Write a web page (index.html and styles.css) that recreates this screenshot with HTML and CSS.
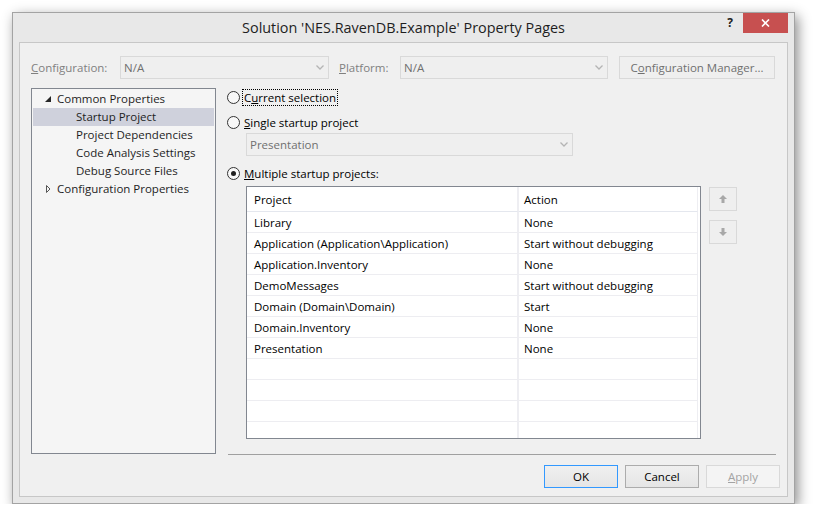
FILE: index.html
```html
<!DOCTYPE html>
<html>
<head>
<meta charset="utf-8">
<title>Property Pages</title>
<link rel="stylesheet" href="styles.css">
</head>
<body>
<div class="desk">
  <div class="window">
    <div class="titlebar">
      <div></div>
      <div class="title">Solution 'NES.RavenDB.Example' Property Pages</div>
      <div class="caption-btns">
        <div class="help">?</div>
        <div class="close"><svg width="9" height="8" viewBox="0 0 9 8"><path d="M1 0.5L8 7.5M8 0.5L1 7.5" stroke="#fff" stroke-width="1.6"/></svg></div>
      </div>
    </div>
    <div class="client">
      <div class="config-row">
        <span class="lbl lbl-config"><u>C</u>onfiguration:</span>
        <div class="combo combo-config"><span>N/A</span><svg width="8" height="5" viewBox="0 0 8 5"><path d="M0.5 0.5L4 4L7.5 0.5" fill="none" stroke="#b4b4b4" stroke-width="1.3"/></svg></div>
        <span class="lbl lbl-platform"><u>P</u>latform:</span>
        <div class="combo combo-platform"><span>N/A</span><svg width="8" height="5" viewBox="0 0 8 5"><path d="M0.5 0.5L4 4L7.5 0.5" fill="none" stroke="#b4b4b4" stroke-width="1.3"/></svg></div>
        <div class="btn btn-cfgmgr">C<u>o</u>nfiguration Manager...</div>
      </div>
      <div class="main">
        <div class="tree">
          <div class="node"><svg width="6" height="6" viewBox="0 0 6 6"><path d="M6 0V6H0Z" fill="#262626"/></svg>Common Properties</div>
          <div class="node child selected">Startup Project</div>
          <div class="node child">Project Dependencies</div>
          <div class="node child">Code Analysis Settings</div>
          <div class="node child">Debug Source Files</div>
          <div class="node"><svg width="6" height="8" viewBox="0 0 6 8"><path d="M1.5 0.5L5 4L1.5 7.5Z" fill="none" stroke="#555"/></svg>Configuration Properties</div>
        </div>
        <div class="pane">
          <div class="radio-row"><span class="radio"></span><span class="rlabel focus">C<u>u</u>rrent selection</span></div>
          <div class="radio-row r2"><span class="radio"></span><span class="rlabel"><u>S</u>ingle startup project</span></div>
          <div class="combo combo-single"><span>Presentation</span><svg width="8" height="5" viewBox="0 0 8 5"><path d="M0.5 0.5L4 4L7.5 0.5" fill="none" stroke="#b4b4b4" stroke-width="1.3"/></svg></div>
          <div class="radio-row r3"><span class="radio checked"></span><span class="rlabel"><u>M</u>ultiple startup projects:</span></div>
          <div class="grid-row">
            <div class="grid-box">
              <div class="grid">
                <div class="cell c1 head">Project</div><div class="cell c2 head">Action</div>
                <div class="cell c1">Library</div><div class="cell c2">None</div>
                <div class="cell c1">Application (Application\Application)</div><div class="cell c2">Start without debugging</div>
                <div class="cell c1">Application.Inventory</div><div class="cell c2">None</div>
                <div class="cell c1">DemoMessages</div><div class="cell c2">Start without debugging</div>
                <div class="cell c1">Domain (Domain\Domain)</div><div class="cell c2">Start</div>
                <div class="cell c1">Domain.Inventory</div><div class="cell c2">None</div>
                <div class="cell c1">Presentation</div><div class="cell c2">None</div>
                <div class="cell c1"></div><div class="cell c2"></div>
                <div class="cell c1"></div><div class="cell c2"></div>
                <div class="cell c1"></div><div class="cell c2"></div>
                <div class="cell c1"></div><div class="cell c2"></div>
              </div>
            </div>
            <div class="movers">
              <div class="mover"><svg width="8" height="8" viewBox="0 0 8 8"><path d="M4 0L8 4H5.5V8H2.5V4H0Z" fill="#a8a8a8"/></svg></div>
              <div class="mover"><svg width="8" height="8" viewBox="0 0 8 8"><path d="M4 8L8 4H5.5V0H2.5V4H0Z" fill="#a8a8a8"/></svg></div>
            </div>
          </div>
          <div class="sep"></div>
        </div>
      </div>
      <div class="buttons">
        <div class="dlg-btn default">OK</div>
        <div class="dlg-btn">Cancel</div>
        <div class="dlg-btn disabled"><u>A</u>pply</div>
      </div>
    </div>
  </div>
</div>
</body>
</html>
```
FILE: styles.css
```css
body {
  margin: 0;
  background: #fff;
  font-family: "Open Sans", "Noto Sans", sans-serif;
  font-size: 11.5px;
  color: #000;
}
.desk {
  padding: 12px 0 0 12px;
}
.window {
  box-sizing: border-box;
  width: 783px;
  height: 492px;
  border: 1px solid #a3a3a3;
  background: #e8e8e8;
  padding: 0 6px 6px;
  display: flex;
  flex-direction: column;
  box-shadow: 3px 4px 12px rgba(0, 0, 0, 0.45);
}
.titlebar {
  flex: none;
  height: 29px;
  display: grid;
  grid-template-columns: 1fr auto 1fr;
}
.title {
  font-size: 14.4px;
  line-height: 29px;
  color: #1e1e1e;
  white-space: nowrap;
}
.caption-btns {
  display: flex;
  justify-content: flex-end;
  align-items: flex-start;
}
.help {
  width: 26px;
  height: 20px;
  font-weight: bold;
  font-size: 12px;
  line-height: 20px;
  text-align: center;
  color: #222;
}
.close {
  width: 45px;
  height: 20px;
  background: #c75050;
  display: flex;
  align-items: center;
  justify-content: center;
}
.client {
  flex: 1;
  border: 1px solid #c7c7c7;
  background: #f0f0f0;
}
.config-row {
  display: flex;
  align-items: center;
  height: 23px;
  margin: 13px 11px 0;
}
.lbl {
  color: #808080;
  white-space: nowrap;
}
.lbl-config { width: 89px; }
.lbl-platform { width: 61px; margin-left: 10px; }
.combo {
  box-sizing: border-box;
  height: 23px;
  border: 1px solid #d9d9d9;
  background: #efefef;
  color: #707070;
  display: flex;
  align-items: center;
  justify-content: space-between;
  padding: 0 4px 0 3px;
}
.combo-config { width: 209px; }
.combo-platform { width: 208px; }
.btn {
  box-sizing: border-box;
  height: 23px;
  display: flex;
  align-items: center;
  justify-content: center;
  white-space: nowrap;
}
.btn-cfgmgr {
  width: 156px;
  margin-left: 11px;
  border: 1px solid #d9d9d9;
  background: #efefef;
  color: #707070;
}
.main {
  display: flex;
  align-items: flex-start;
  margin: 9px 11px 0;
}
.tree {
  box-sizing: border-box;
  width: 185px;
  height: 366px;
  border: 1px solid #828790;
  background: #f5f5f5;
  padding: 1px;
}
.node {
  height: 18px;
  display: flex;
  align-items: center;
  padding-left: 12px;
  padding-bottom: 1px;
  box-sizing: border-box;
  white-space: nowrap;
  color: #1e1e1e;
}
.node svg {
  flex: none;
  margin-right: 6px;
  margin-top: 1px;
}
.node.child { padding-left: 43px; }
.node.selected { background: #cfd1dc; }
.pane {
  flex: 1;
  margin-left: 11px;
  display: flex;
  flex-direction: column;
}
.radio-row {
  height: 18px;
  display: flex;
  align-items: center;
}
.r2 { margin-top: 7px; }
.r3 { margin-top: 8px; }
.radio {
  box-sizing: border-box;
  flex: none;
  width: 13px;
  height: 13px;
  border-radius: 50%;
  border: 1px solid #333;
  background: #f8f8f8;
  display: flex;
  align-items: center;
  justify-content: center;
}
.radio.checked::after {
  content: "";
  width: 5px;
  height: 5px;
  border-radius: 50%;
  background: #1f1f1f;
}
.rlabel {
  margin-left: 2px;
  padding: 0 1px;
  border: 1px dotted transparent;
  line-height: 15px;
  white-space: nowrap;
}
.rlabel.focus { border-color: #000; }
.combo-single {
  width: 327px;
  margin: 2px 0 0 19px;
}
.grid-row {
  display: flex;
  align-items: flex-start;
  margin: 4px 0 0 19px;
}
.grid-box {
  box-sizing: border-box;
  width: 455px;
  height: 253px;
  border: 1px solid #828790;
  background: #fff;
  overflow: hidden;
}
.grid {
  display: grid;
  grid-template-columns: 272px 179px;
  grid-template-rows: 25px;
  grid-auto-rows: 21px;
}
.cell {
  box-sizing: border-box;
  border-bottom: 1px solid #ededf1;
  display: flex;
  align-items: center;
  white-space: nowrap;
  overflow: hidden;
}
.c1 {
  padding-left: 7px;
  border-right: 2px solid #eeeef2;
}
.c2 {
  padding-left: 5px;
  border-right: 1px solid #eeeef2;
}
.head { border-bottom-color: #e4e7ee; }
.movers {
  margin: 1px 0 0 8px;
  display: flex;
  flex-direction: column;
  gap: 9px;
}
.mover {
  box-sizing: border-box;
  width: 28px;
  height: 24px;
  border: 1px solid #d9d9d9;
  background: #efefef;
  display: flex;
  align-items: center;
  justify-content: center;
}
.sep {
  height: 1px;
  background: #a0a0a0;
  margin: 15px 0 0 1px;
}
.buttons {
  display: flex;
  justify-content: flex-end;
  gap: 7px;
  margin: 10px 7px 0 0;
}
.dlg-btn {
  box-sizing: border-box;
  width: 74px;
  height: 23px;
  border: 1px solid #acacac;
  background: linear-gradient(#f0f0f0, #e5e5e5);
  display: flex;
  align-items: center;
  justify-content: center;
}
.dlg-btn.default { border-color: #3399ff; }
.dlg-btn.disabled {
  border-color: #d9d9d9;
  background: #f4f4f4;
  color: #a3a3a3;
}
```
